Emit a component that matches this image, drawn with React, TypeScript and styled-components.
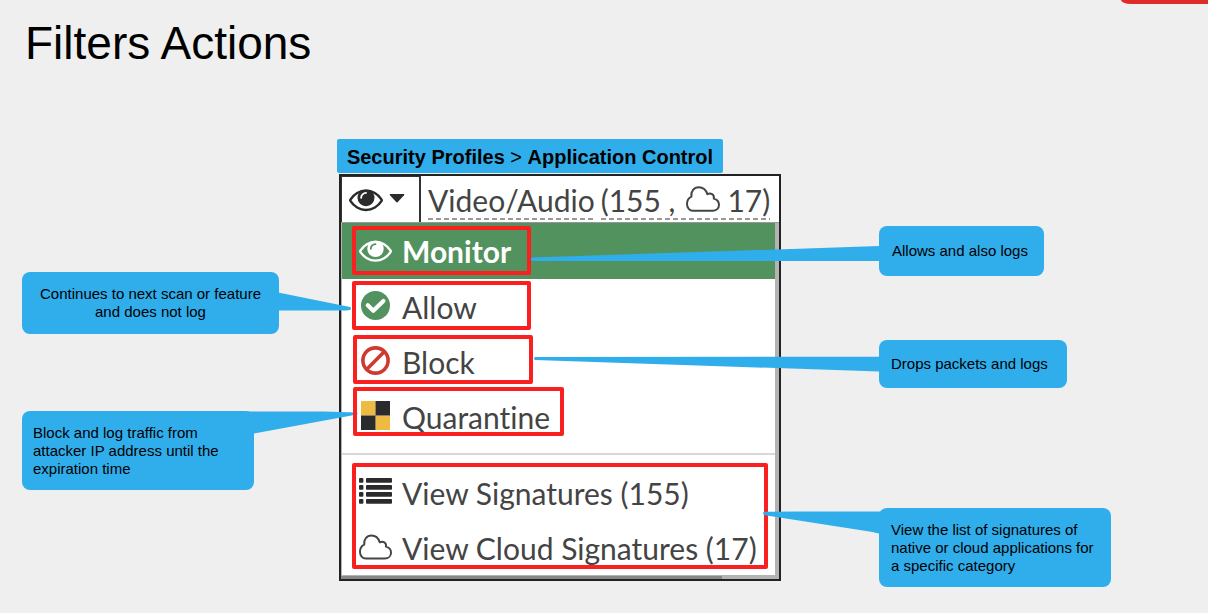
import React from "react";
import styled, { createGlobalStyle, css } from "styled-components";

const BLUE = "#30aeec";
const RED = "#fb2020";
const GREEN = "#52925e";
const INK = "#2b2b2b";

const GlobalStyle = createGlobalStyle`
  *, *::before, *::after { box-sizing: border-box; }
  body {
    margin: 0;
    background: #efefef;
    color: #000;
    font-family: "Liberation Sans", Arial, sans-serif;
  }
`;

const Slide = styled.div`
  min-height: 100vh;
  display: flex;
  flex-direction: column;
  overflow: hidden;
`;

const BrandTab = styled.div`
  align-self: flex-end;
  width: 87px;
  height: 4px;
  background: #de2d28;
  border-bottom-left-radius: 10px 4px;
`;

const Title = styled.h1`
  margin: 0;
  padding: 13px 24px 0 25px;
  font-size: 46px;
  line-height: 52px;
  font-weight: 400;
`;

const Diagram = styled.main`
  display: grid;
  grid-template-columns: minmax(337px, 337fr) 444px minmax(330px, 427fr);
  padding: 70px 0 24px;
`;

const LeftNotes = styled.div`
  justify-self: end;
  width: 315px;
  padding-top: 133px;
  display: flex;
  flex-direction: column;
  align-items: flex-start;
  gap: 77px;
`;

const RightNotes = styled.div`
  padding: 87px 0 0 98px;
  display: flex;
  flex-direction: column;
  align-items: flex-start;
`;

const Note = styled.aside<{ $w: number; $h: number; $pad?: number; $center?: boolean; $after?: number }>`
  position: relative;
  z-index: 1;
  display: flex;
  align-items: center;
  justify-content: ${(p) => (p.$center ? "center" : "flex-start")};
  width: ${(p) => p.$w}px;
  min-height: ${(p) => p.$h}px;
  margin-bottom: ${(p) => p.$after ?? 0}px;
  padding: 0 ${(p) => p.$pad ?? 12}px;
  border-radius: 8px;
  background: ${BLUE};
  font-size: 15px;
  line-height: 18px;
  text-align: ${(p) => (p.$center ? "center" : "left")};
  white-space: nowrap;
`;

const Tail = styled.svg<{ $side: "left" | "right"; $top: number }>`
  position: absolute;
  top: ${(p) => p.$top}px;
  ${(p) => (p.$side === "right" ? css`left: 100%;` : css`right: 100%;`)}
  overflow: visible;
  fill: ${BLUE};
  pointer-events: none;
`;

const Center = styled.section`
  display: flex;
  flex-direction: column;
  align-items: flex-start;
`;

const Crumb = styled.div`
  height: 34px;
  width: 386px;
  padding: 0 7px;
  border-radius: 2px;
  background: ${BLUE};
  font-size: 20px;
  line-height: 36px;
  text-align: center;
  white-space: nowrap;
`;

const Panel = styled.div`
  width: 442px;
  margin: 1px 0 0 2px;
  border: 2px solid #222;
  background: #b3b3b3;
  color: #444;
  font-family: Lato, sans-serif;
  font-size: 30px;
  font-variant-ligatures: none;
`;

const PanelHead = styled.div`
  display: flex;
  height: 47px;
  background: #fff;
  border-bottom: 1px solid #999;
`;

const ActionButton = styled.button`
  display: flex;
  flex-shrink: 0;
  align-items: center;
  gap: 6px;
  width: 80px;
  padding: 0 0 2px 7px;
  border: 0 solid #333;
  border-width: 1px 2px 0 1px;
  background: #fff;
  color: ${INK};
`;

const Category = styled.div`
  display: flex;
  align-items: flex-start;
  gap: 6px;
  padding: 6px 0 0 7px;
  line-height: 36px;
  white-space: nowrap;
`;

const Dashed = styled.span`
  display: flex;
  align-items: flex-start;
  height: 38px;
  background: repeating-linear-gradient(90deg, #999 0 5px, transparent 5px 8px) bottom / 100% 2px no-repeat;
`;

const CloudSlot = styled.span`
  display: flex;
  padding: 4px 7px 0 11px;
`;

const Menu = styled.div`
  margin: 0 4px 0 1px;
  background: #fff;
`;

const MenuRow = styled.button<{ $active?: boolean }>`
  display: flex;
  align-items: center;
  gap: 10px;
  width: 100%;
  height: ${(p) => (p.$active ? 56 : 55)}px;
  padding: 0 0 0 17px;
  border: 0;
  background: ${(p) => (p.$active ? GREEN : "transparent")};
  color: ${(p) => (p.$active ? "#fff" : "#444")};
  font: inherit;
  font-weight: ${(p) => (p.$active ? 700 : 400)};
  font-variant-ligatures: none;
  text-align: left;
  white-space: nowrap;
`;

const IconSlot = styled.span<{ $color?: string }>`
  display: flex;
  justify-content: center;
  width: 33px;
  padding-bottom: 2px;
  color: ${(p) => p.$color ?? "inherit"};
`;

const Group = styled.div`
  position: relative;
`;

const Highlight = styled.span<{ $x?: number; $y: number; $w: number; $h?: number; $front?: boolean }>`
  position: absolute;
  left: ${(p) => p.$x ?? 10}px;
  top: ${(p) => p.$y}px;
  width: ${(p) => p.$w}px;
  height: ${(p) => p.$h ?? 49}px;
  border: 4px solid ${RED};
  border-radius: 2px;
  pointer-events: none;
  z-index: ${(p) => (p.$front ? 2 : 0)};
`;

const Divider = styled.hr`
  height: 2px;
  margin: 9px 0 10px;
  border: 0;
  background: #d8d8d8;
`;

const PanelFoot = styled.div`
  width: 381px;
  height: 3px;
  margin-top: 1px;
  background: #888;
`;

const EyeIcon = () => (
  <svg width="34" height="34" viewBox="0 0 1792 1792" fill="currentColor" aria-hidden="true">
    <path d="M1664 960q-152-236-381-353 61 104 61 225 0 185-131.500 316.500t-316.500 131.500-316.500-131.500-131.500-316.500q0-121 61-225-229 117-381 353 133 205 333.500 326.500t434.500 121.500 434.500-121.500 333.500-326.500zm-720-384q0-20-14-34t-34-14q-125 0-214.500 89.500t-89.500 214.500q0 20 14 34t34 14 34-14 14-34q0-86 61-147t147-61q20 0 34-14t14-34zm848 384q0 34-20 69-140 230-376.500 368.500t-499.500 138.500-499.500-139-376.500-368q-20-35-20-69t20-69q140-229 376.500-368t499.500-139 499.500 139 376.500 368q20 35 20 69z" />
  </svg>
);

const CaretIcon = () => (
  <svg width="16" height="9" viewBox="0 0 16 9" fill="currentColor" aria-hidden="true">
    <path d="M1.500 0h13q1.500 0 .5 1.200L8.800 8q-.8.800-1.600 0L1 1.200Q0 0 1.500 0z" />
  </svg>
);

const CheckIcon = () => (
  <svg width="29" height="29" viewBox="0 0 29 29" aria-hidden="true">
    <circle cx="14.500" cy="14.500" r="14.500" fill="currentColor" />
    <path d="M6.800 14.200l5.500 5.500L22.400 9.900" fill="none" stroke="#fff" strokeWidth="4.200" strokeLinejoin="round" strokeLinecap="round" />
  </svg>
);

const BanIcon = () => (
  <svg width="29" height="29" viewBox="0 0 29 29" fill="none" stroke="currentColor" strokeWidth="3.600" aria-hidden="true">
    <circle cx="14.500" cy="14.500" r="12.600" />
    <path d="M5.800 23.200L23.200 5.800" />
  </svg>
);

const QuarantineIcon = () => (
  <svg width="29" height="29" viewBox="0 0 29 29" aria-hidden="true">
    <path d="M0 0h14.500v14.500H0zM14.500 14.500H29V29H14.500z" fill="#efba42" />
    <path d="M14.500 0H29v14.500H14.500zM0 14.500h14.500V29H0z" fill={INK} />
  </svg>
);

const ListIcon = () => (
  <svg width="33" height="30" viewBox="0 0 33 30" fill="currentColor" aria-hidden="true">
    {[1, 8, 15, 22].map((y) => (
      <React.Fragment key={y}>
        <rect x="0" y={y} width="4.400" height="4.700" rx="1" />
        <rect x="7" y={y} width="26" height="4.700" rx="1" />
      </React.Fragment>
    ))}
  </svg>
);

const CloudIcon = () => (
  <svg width="34" height="26" viewBox="0 0 34 26" fill="none" stroke="currentColor" strokeWidth="2" strokeLinejoin="round" aria-hidden="true">
    <path d="M7 24.800h19.500c3.800 0 6.500-2.600 6.500-6 0-3.300-2.200-5.400-5.200-6.200C28.600 8.400 24.600 6.600 21.400 8.200 20 3.800 16.700 1.200 12.800 1.200c-4.900 0-8 3.900-7.400 9.400C2.700 11.900 1 14.600 1 17.900c0 4 2.600 6.900 6 6.900z" />
  </svg>
);

export default function App() {
  return (
    <Slide>
      <GlobalStyle />
      <BrandTab />
      <Title>Filters Actions</Title>
      <Diagram>
        <LeftNotes>
          <Note $w={257} $h={62} $center>
            Continues to next scan or feature
            <br />
            and does not log
            <Tail $side="right" $top={20} width="73" height="20" viewBox="0 0 73 20">
              <path d="M-1 .6L71 15q2 1.500 0 3l-4 .5H-1z" />
            </Tail>
          </Note>
          <Note $w={232} $h={79} $pad={11}>
            Block and log traffic from
            <br />
            attacker IP address until the
            <br />
            expiration time
            <Tail $side="right" $top={0} width="104" height="23" viewBox="0 0 104 23">
              <path d="M-8 .6H70L103 1.500q1 1 0 2L0 22.500H-8z" />
            </Tail>
          </Note>
        </LeftNotes>

        <Center>
          <Crumb>
            <b>Security Profiles</b> &gt; <b>Application Control</b>
          </Crumb>
          <Panel>
            <PanelHead>
              <ActionButton aria-label="Filter action">
                <EyeIcon />
                <CaretIcon />
              </ActionButton>
              <Category>
                <Dashed>Video/Audio</Dashed>
                <Dashed>
                  (155 ,
                  <CloudSlot>
                    <CloudIcon />
                  </CloudSlot>
                  17)
                </Dashed>
              </Category>
            </PanelHead>
            <Menu>
              <Group>
                <MenuRow $active>
                  <IconSlot><EyeIcon /></IconSlot>
                  Monitor
                </MenuRow>
                <Highlight $y={3} $w={179} />
              </Group>
              <Group>
                <MenuRow>
                  <IconSlot $color={GREEN}><CheckIcon /></IconSlot>
                  Allow
                </MenuRow>
                <Highlight $y={2} $w={179} />
              </Group>
              <Group>
                <MenuRow>
                  <IconSlot $color="#cf3a30"><BanIcon /></IconSlot>
                  Block
                </MenuRow>
                <Highlight $x={11} $y={1} $w={180} />
              </Group>
              <Group>
                <MenuRow>
                  <IconSlot><QuarantineIcon /></IconSlot>
                  Quarantine
                </MenuRow>
                <Highlight $x={11} $y={-2} $w={211} $front />
              </Group>
              <Divider />
              <Group>
                <MenuRow>
                  <IconSlot $color={INK}><ListIcon /></IconSlot>
                  View Signatures (155)
                </MenuRow>
                <MenuRow>
                  <IconSlot><CloudIcon /></IconSlot>
                  View Cloud Signatures (17)
                </MenuRow>
                <Highlight $y={-2} $w={416} $h={106} />
              </Group>
            </Menu>
            <PanelFoot />
          </Panel>
        </Center>

        <RightNotes>
          <Note $w={165} $h={50} $pad={13} $after={64}>
            Allows and also logs
            <Tail $side="left" $top={20} width="349" height="16" viewBox="0 0 349 16">
              <path d="M349 0L2 11.500q-2 1.500 0 3.500H349z" />
            </Tail>
          </Note>
          <Note $w={188} $h={48} $after={120}>
            Drops packets and logs
            <Tail $side="left" $top={16} width="346" height="16" viewBox="0 0 346 16">
              <path d="M346 .8L2 1q-2 1.500 0 3L346 15.500z" />
            </Tail>
          </Note>
          <Note $w={232} $h={79}>
            View the list of signatures of
            <br />
            native or cloud applications for
            <br />
            a specific category
            <Tail $side="left" $top={3} width="116" height="24" viewBox="0 0 116 24">
              <path d="M124 .4H40L2 .8Q0 .9 0 2.200T2 4.200L108 20.800l8 1.700h8z" />
            </Tail>
          </Note>
        </RightNotes>
      </Diagram>
    </Slide>
  );
}
